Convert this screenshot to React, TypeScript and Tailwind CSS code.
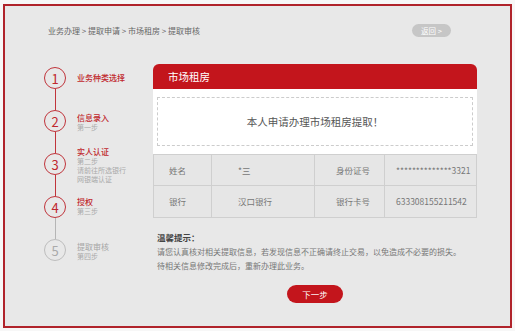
import React from "react";

const font = { fontFamily: '"Noto Sans CJK SC", "Noto Sans", sans-serif' };

type Step = { n: number; title: string; subs: string[]; mt: string; active: boolean };

const steps: Step[] = [
  { n: 1, title: "业务种类选择", subs: [], mt: "mt-[6px]", active: true },
  { n: 2, title: "信息录入", subs: ["第一步"], mt: "mt-[3px]", active: true },
  { n: 3, title: "实人认证", subs: ["第二步", "请前往所选银行", "网银端认证"], mt: "mt-[-6px]", active: true },
  { n: 4, title: "授权", subs: ["第三步"], mt: "mt-[1px]", active: true },
  { n: 5, title: "提取审核", subs: ["第四步"], mt: "mt-[3px]", active: false },
];

function Steps() {
  return (
    <div className="flex flex-col pl-[39px] mt-[3px] w-[148px]">
      {steps.map((s, i) => {
        const last = i === steps.length - 1;
        const nextActive = !last && steps[i + 1].active;
        return (
          <div key={s.n} className="flex items-start">
            <div className="flex flex-col items-center w-[22px]">
              <div
                className={
                  "w-[22px] h-[22px] rounded-full border flex items-center justify-center text-[13px] leading-none " +
                  (s.active ? "border-[#c0343b] text-[#c0272d]" : "border-[#bdbdbd] text-[#aaaaaa]")
                }
              >
                {s.n}
              </div>
              {!last && (
                <div className={"w-px h-[21px] " + (nextActive ? "bg-[#c0343b]" : "bg-[#b5b5b5]")} />
              )}
            </div>
            <div className={"ml-[11px] flex flex-col " + s.mt}>
              <div
                className={
                  "text-[8px] leading-[10px] " + (s.active ? "text-[#c0272d] font-medium" : "text-[#a5a5a5]")
                }
              >
                {s.title}
              </div>
              {s.subs.map((t) => (
                <div key={t} className="text-[7px] leading-[9px] text-[#aaaaaa] whitespace-nowrap">
                  {t}
                </div>
              ))}
            </div>
          </div>
        );
      })}
    </div>
  );
}

function Cell({ children, w, pl }: { children: React.ReactNode; w: string; pl: string }) {
  return (
    <div className={"flex items-center border-r border-[#cfcfcf] last:border-r-0 text-[8.5px] text-[#777] " + w + " " + pl}>
      {children}
    </div>
  );
}

function Panel() {
  return (
    <div className="w-[324px] flex flex-col">
      <div className="h-[25px] rounded-t-[6px] bg-[#c3151c] flex items-center pl-[15px] text-white text-[10.5px]">
        市场租房
      </div>
      <div className="bg-white px-[4px] pt-[8px] pb-[8px]">
        <div className="h-[49px] border border-dashed border-[#cccccc] flex items-center justify-center text-[10.5px] text-[#555]">
          本人申请办理市场租房提取！
        </div>
      </div>
      <div className="border border-[#cfcfcf] bg-[#e6e6e6]">
        <div className="flex h-[31px] border-b border-[#cfcfcf]">
          <Cell w="w-[58px]" pl="pl-[15px]">姓名</Cell>
          <Cell w="w-[103px]" pl="pl-[26px]">*三</Cell>
          <Cell w="w-[70px]" pl="pl-[21px]">身份证号</Cell>
          <Cell w="flex-1" pl="pl-[11px]">**************3321</Cell>
        </div>
        <div className="flex h-[31px]">
          <Cell w="w-[58px]" pl="pl-[15px]">银行</Cell>
          <Cell w="w-[103px]" pl="pl-[26px]">汉口银行</Cell>
          <Cell w="w-[70px]" pl="pl-[21px]">银行卡号</Cell>
          <Cell w="flex-1" pl="pl-[11px]">633308155211542</Cell>
        </div>
      </div>
      <div className="mt-[13px] pl-[4px]">
        <div className="text-[8.5px] leading-[12px] font-bold text-[#444]">温馨提示：</div>
        <div className="mt-[2px] text-[8px] leading-[14px] text-[#777] whitespace-nowrap">
          请您认真核对相关提取信息，若发现信息不正确请终止交易，以免造成不必要的损失。
        </div>
        <div className="text-[8px] leading-[14px] text-[#777]">待相关信息修改完成后，重新办理此业务。</div>
      </div>
      <div className="flex justify-center mt-[12px]">
        <div className="w-[56px] h-[18px] rounded-full bg-[#c3151c] text-white text-[8.5px] flex items-center justify-center">
          下一步
        </div>
      </div>
    </div>
  );
}

export default function App() {
  return (
    <div className="w-[515px] h-[331px] bg-[#f7f7f7] pt-[4px] pl-[3px]" style={font}>
      <div className="w-[509px] h-[324px] border-2 border-[#b0232b] bg-[#e8e8e8] flex flex-col">
        <div className="flex items-center justify-between mt-[18px] pl-[43px] pr-[59px] h-[13px]">
          <div className="text-[8px] text-[#666] whitespace-nowrap">
            业务办理 &gt; 提取申请 &gt; 市场租房 &gt; 提取审核
          </div>
          <div className="w-[39px] h-[13px] rounded-full bg-[#c6c6c6] text-white text-[7.5px] flex items-center justify-center">
            返回 &gt;
          </div>
        </div>
        <div className="flex mt-[27px]">
          <Steps />
          <Panel />
        </div>
      </div>
    </div>
  );
}
